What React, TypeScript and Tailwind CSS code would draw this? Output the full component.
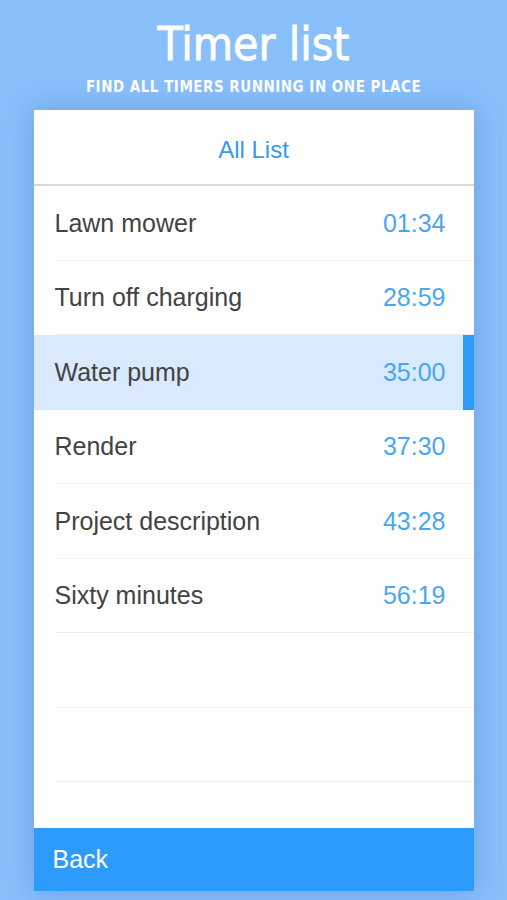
import React from "react";

type Timer = { name: string; time: string; active?: boolean };

const timers: Timer[] = [
  { name: "Lawn mower", time: "01:34" },
  { name: "Turn off charging", time: "28:59" },
  { name: "Water pump", time: "35:00", active: true },
  { name: "Render", time: "37:30" },
  { name: "Project description", time: "43:28" },
  { name: "Sixty minutes", time: "56:19" },
];

const TimerRow = ({ item }: { item?: Timer }) => (
  <div
    className={
      "relative h-[74.5px] flex items-center justify-between pl-[21px] pr-[28px] " +
      (item?.active ? "bg-[#d8eafc]" : "")
    }
  >
    {item && (
      <>
        <span className="text-[25px] text-[#434343]">{item.name}</span>
        <span className="text-[25px] text-[#4ba6f2]">{item.time}</span>
      </>
    )}
    {item?.active && (
      <div className="absolute right-0 top-0 bottom-0 w-[11px] bg-[#2d9bf8]" />
    )}
    {!item?.active && (
      <div className="absolute left-[21px] right-0 bottom-0 h-px bg-[#efefef]" />
    )}
  </div>
);

export default function App() {
  const rows: (Timer | undefined)[] = [...timers, undefined, undefined];
  return (
    <div className="w-[507px] h-[900px] bg-[#89bffb] flex flex-col items-center overflow-hidden font-['Liberation_Sans',sans-serif]">
      <h1 className="mt-[16px] text-[46px] leading-[56px] text-white font-medium font-['DejaVu_Sans_Condensed','DejaVu_Sans',sans-serif] [-webkit-text-stroke:0.8px_white]">
        Timer list
      </h1>
      <p className="mt-[5px] text-[15px] leading-[20px] text-white font-semibold tracking-[0.5px] font-['DejaVu_Sans_Condensed','DejaVu_Sans',sans-serif]">
        FIND ALL TIMERS RUNNING IN ONE PLACE
      </p>
      <div className="mt-[13px] w-[440px] h-[781px] bg-white flex flex-col shadow-[0_0_28px_rgba(50,100,180,0.35)]">
        <div className="h-[76px] shrink-0 pt-[5px] flex items-center justify-center text-[24px] text-[#3a98ea] border-b-2 border-[#d9d9d9]">
          All List
        </div>
        <div className="flex-1 flex flex-col">
          {rows.map((r, i) => (
            <TimerRow key={i} item={r} />
          ))}
        </div>
        <div className="h-[63px] shrink-0 bg-[#2c9bfc] flex items-center pl-[19px] text-[25px] text-white">
          Back
        </div>
      </div>
    </div>
  );
}
